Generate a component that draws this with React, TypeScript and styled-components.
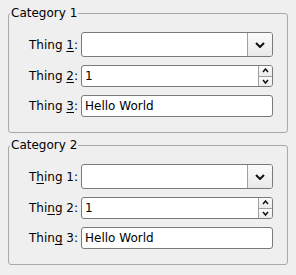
import React from 'react';
import styled, { createGlobalStyle } from 'styled-components';

const GlobalStyle = createGlobalStyle`
  html, body {
    margin: 0;
    padding: 0;
    background: #efefef;
  }
  body {
    font-family: 'DejaVu Sans', 'Liberation Sans', sans-serif;
    font-size: 12px;
    color: #000;
  }
`;

const Page = styled.div`
  width: 296px;
  height: 275px;
  box-sizing: border-box;
  padding: 6px 8px 0 8px;
  display: flex;
  flex-direction: column;
  gap: 5px;
`;

const Group = styled.fieldset`
  margin: 0;
  padding: 0;
  border: 1px solid #a9a9a9;
  border-radius: 3px;
  min-width: 0;
`;

const Legend = styled.legend`
  margin-left: 1px;
  padding: 0 1px;
  line-height: 14px;
`;

const Form = styled.div`
  display: grid;
  grid-template-columns: auto 1fr;
  column-gap: 3px;
  row-gap: 8px;
  align-items: center;
  padding: 12px 14px 15px 20px;
`;

const Label = styled.label`
  justify-self: end;
  white-space: nowrap;

  u {
    text-decoration: underline;
    text-underline-offset: 2px;
  }
`;

const Field = styled.div<{ $tall?: boolean }>`
  height: ${(p) => (p.$tall ? 25 : 22)}px;
  box-sizing: border-box;
  border: 1px solid #7a7a7a;
  border-radius: 3px;
  background: #fff;
  display: flex;
  align-items: stretch;
  overflow: hidden;
`;

const Text = styled.span`
  flex: 1;
  display: flex;
  align-items: center;
  padding-left: 3px;
`;

const DropButton = styled.div`
  width: 24px;
  border-left: 1px solid #a0a0a0;
  background: linear-gradient(#fbfbfb, #e9e9e9);
  display: flex;
  align-items: center;
  justify-content: center;
`;

const SpinButtons = styled.div`
  width: 13px;
  border-left: 1px solid #a0a0a0;
  display: flex;
  flex-direction: column;
`;

const SpinButton = styled.div<{ $top?: boolean }>`
  flex: 1;
  display: flex;
  align-items: center;
  justify-content: center;
  background: linear-gradient(#fbfbfb, #ebebeb);
  border-bottom: ${(p) => (p.$top ? '1px solid #a0a0a0' : 'none')};
`;

const Chevron = ({ up, w, h, sw }: { up?: boolean; w: number; h: number; sw: number }) => (
  <svg width={w} height={h} viewBox={`0 0 ${w} ${h}`}>
    <polyline
      points={up ? `1,${h - 1} ${w / 2},1 ${w - 1},${h - 1}` : `1,1 ${w / 2},${h - 1} ${w - 1},1`}
      fill="none"
      stroke="#111"
      strokeWidth={sw}
    />
  </svg>
);

type Mn = [string, string, string];

const Row = ({ label }: { label: Mn }) => (
  <Label>
    {label[0]}
    <u>{label[1]}</u>
    {label[2]}
  </Label>
);

const Category = ({ title, labels }: { title: string; labels: Mn[] }) => (
  <Group>
    <Legend>{title}</Legend>
    <Form>
      <Row label={labels[0]} />
      <Field $tall>
        <Text />
        <DropButton>
          <Chevron w={10} h={6} sw={2} />
        </DropButton>
      </Field>
      <Row label={labels[1]} />
      <Field>
        <Text>1</Text>
        <SpinButtons>
          <SpinButton $top>
            <Chevron up w={7} h={5} sw={1.5} />
          </SpinButton>
          <SpinButton>
            <Chevron w={7} h={5} sw={1.5} />
          </SpinButton>
        </SpinButtons>
      </Field>
      <Row label={labels[2]} />
      <Field>
        <Text>Hello World</Text>
      </Field>
    </Form>
  </Group>
);

export default function App() {
  return (
    <>
      <GlobalStyle />
      <Page>
        <Category
          title="Category 1"
          labels={[
            ['Thing ', '1', ':'],
            ['Thing ', '2', ':'],
            ['Thing ', '3', ':'],
          ]}
        />
        <Category
          title="Category 2"
          labels={[
            ['T', 'h', 'ing 1:'],
            ['Thi', 'n', 'g 2:'],
            ['Thin', 'g', ' 3:'],
          ]}
        />
      </Page>
    </>
  );
}
